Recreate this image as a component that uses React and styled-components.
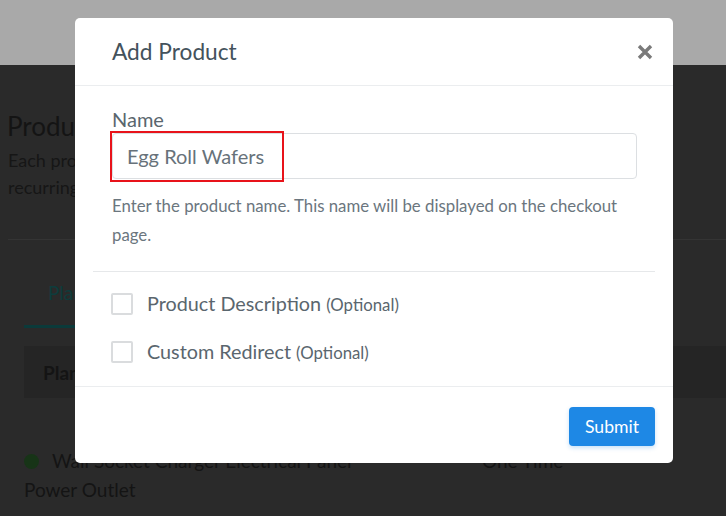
import styled, { createGlobalStyle } from "styled-components";

const GlobalStyle = createGlobalStyle`
  html, body {
    margin: 0;
    padding: 0;
    background: #2a2a2a;
    font-family: Lato, "Open Sans", sans-serif;
    overflow: hidden;
  }
`;

const Page = styled.div`
  position: relative;
  width: 726px;
  height: 516px;
  background: #2a2a2a;
  overflow: hidden;
`;

const TopBand = styled.div`
  height: 65px;
  background: #a9a9a9;
`;

const Content = styled.div`
  padding: 46px 0 0 8px;
  color: #141414;
`;

const PageTitle = styled.h1`
  margin: 0 0 6px -1px;
  font-size: 26px;
  font-weight: 400;
  line-height: 30px;
  white-space: nowrap;
`;

const PageText = styled.p`
  margin: 0;
  font-size: 18px;
  line-height: 27px;
  color: #161616;
  white-space: nowrap;
`;

const Rule = styled.div`
  margin-top: 38px;
  height: 1px;
  background: #343434;
`;

const Section = styled.div`
  padding: 0 0 0 16px;
`;

const Tabs = styled.div`
  display: flex;
  margin-top: 40px;
`;

const Tab = styled.div`
  padding: 0 24px 19px;
  font-size: 19px;
  line-height: 26px;
  color: #0e3c3c;
  border-bottom: 3px solid #0b3a3a;
`;

const TableHead = styled.div`
  margin-top: 18px;
  height: 52px;
  display: flex;
  align-items: center;
  padding-left: 19px;
  background: #252525;
  font-size: 19px;
  font-weight: 700;
  color: #141414;
`;

const Row = styled.div`
  display: grid;
  grid-template-columns: 458px 1fr;
  margin-top: 48px;
  font-size: 19px;
  line-height: 29px;
  color: #141414;
`;

const Dot = styled.span`
  display: inline-block;
  width: 15px;
  height: 15px;
  border-radius: 50%;
  background: #173417;
  margin: 0 13px 0 0;
  vertical-align: -1px;
`;

const Overlay = styled.div`
  position: absolute;
  left: 75px;
  top: 18px;
  width: 598px;
  height: 445px;
  background: #fff;
  border-radius: 5px;
  display: flex;
  flex-direction: column;
`;

const ModalHeader = styled.div`
  height: 67px;
  display: flex;
  align-items: center;
  justify-content: space-between;
  padding: 0 19px 0 37px;
  border-bottom: 1px solid #ebedef;
`;

const ModalTitle = styled.h2`
  margin: 0;
  font-size: 22.7px;
  font-weight: 400;
  color: #44525c;
`;

const Close = styled.button`
  border: none;
  background: none;
  padding: 0;
  width: 22px;
  height: 22px;
  margin-right: -2px;
  display: flex;
  align-items: center;
  justify-content: center;
  cursor: pointer;
`;

const ModalBody = styled.div`
  flex: 1;
  padding: 23px 18px 0;
  border-bottom: 1px solid #ebedef;
`;

const Field = styled.div`
  padding: 0 18px 22px 19px;
  border-bottom: 1px solid #e6e8ea;
`;

const Label = styled.div`
  font-size: 20px;
  line-height: 20px;
  color: #5a666e;
  margin-bottom: 4px;
`;

const InputWrap = styled.div`
  position: relative;
`;

const Input = styled.div`
  height: 44px;
  border: 1px solid #dcdfe2;
  border-radius: 4px;
  display: flex;
  align-items: center;
  padding-left: 14px;
  font-size: 20px;
  color: #67727a;
`;

const Highlight = styled.div`
  position: absolute;
  left: -2px;
  top: -2px;
  width: 170px;
  height: 47px;
  border: 2px solid #e8131a;
`;

const Help = styled.p`
  margin: 12px 0 0;
  font-size: 16.8px;
  line-height: 29px;
  color: #6b767e;
`;

const Options = styled.div`
  padding: 19px 19px 0 18px;
  display: flex;
  flex-direction: column;
  gap: 22px;
`;

const Option = styled.label`
  display: flex;
  align-items: center;
  gap: 14px;
  font-size: 19.8px;
  line-height: 24px;
  color: #5a666e;
`;

const Box = styled.span`
  width: 18px;
  height: 18px;
  border: 2px solid #dadcde;
  border-radius: 2px;
  flex-shrink: 0;
`;

const Optional = styled.span`
  font-size: 16.8px;
`;

const ModalFooter = styled.div`
  height: 76px;
  display: flex;
  align-items: center;
  justify-content: flex-end;
  padding: 0 18px;
`;

const Submit = styled.button`
  width: 86px;
  height: 39px;
  border: none;
  border-radius: 4px;
  background: #1e88e5;
  color: #fff;
  font-family: Lato, sans-serif;
  font-size: 17.6px;
  box-shadow: 0 2px 4px rgba(30, 136, 229, 0.25);
  margin-top: 3px;
`;

export default function App() {
  return (
    <Page>
      <GlobalStyle />
      <TopBand />
      <Content>
        <PageTitle>Products</PageTitle>
        <PageText>
          Each product can have a one-time payment or
          <br />
          recurring subscription plans.
        </PageText>
        <Rule />
        <Section>
          <Tabs>
            <Tab>Plans</Tab>
          </Tabs>
          <TableHead>Plan</TableHead>
          <Row>
            <div>
              <Dot />
              Wall Socket Charger Electrical Panel
              <br />
              Power Outlet
            </div>
            <div>One Time</div>
          </Row>
        </Section>
      </Content>

      <Overlay>
        <ModalHeader>
          <ModalTitle>Add Product</ModalTitle>
          <Close aria-label="Close">
            <svg width="16" height="16" viewBox="0 0 16 16">
              <path d="M2 2L14 14M14 2L2 14" stroke="#7a7a7a" strokeWidth="3.4" />
            </svg>
          </Close>
        </ModalHeader>
        <ModalBody>
          <Field>
            <Label>Name</Label>
            <InputWrap>
              <Input>Egg Roll Wafers</Input>
              <Highlight />
            </InputWrap>
            <Help>
              Enter the product name. This name will be displayed on the checkout page.
            </Help>
          </Field>
          <Options>
            <Option>
              <Box />
              <span>
                Product Description <Optional>(Optional)</Optional>
              </span>
            </Option>
            <Option>
              <Box />
              <span>
                Custom Redirect <Optional>(Optional)</Optional>
              </span>
            </Option>
          </Options>
        </ModalBody>
        <ModalFooter>
          <Submit>Submit</Submit>
        </ModalFooter>
      </Overlay>
    </Page>
  );
}
